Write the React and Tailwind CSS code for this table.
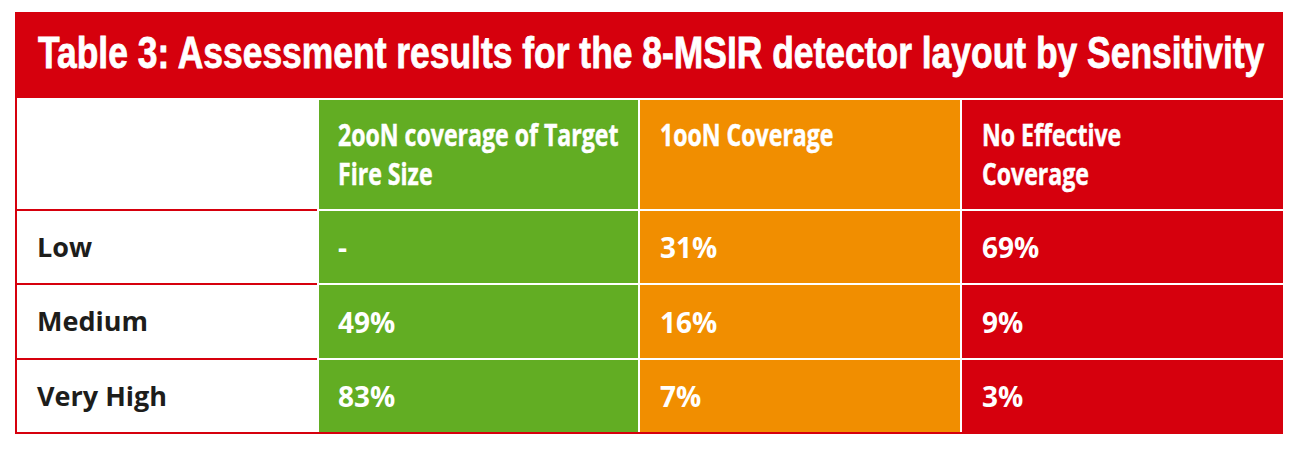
import React from "react";

const rows = [
  { label: "Low", two: "-", one: "31%", none: "69%" },
  { label: "Medium", two: "49%", one: "16%", none: "9%" },
  { label: "Very High", two: "83%", one: "7%", none: "3%" },
];

const Value = ({ children }) => (
  <span className="font-['Open_Sans',sans-serif] font-bold text-[28px] text-white">
    {children}
  </span>
);

const HeadText = ({ children }) => (
  <span className="inline-block origin-left scale-x-[0.745] whitespace-nowrap font-['Open_Sans',sans-serif] font-bold text-[31px] leading-[39px] text-white [-webkit-text-stroke:0.5px_white]">
    {children}
  </span>
);

const App = () => {
  return (
    <div className="w-[1300px] h-[452px] bg-white pt-[12px] pl-[15px]">
      <div className="w-[1268px] border-l-2 border-b-2 border-[#d6000d]">
        <div className="h-[86px] bg-[#d6000d] flex items-center pl-[21px] pb-[5px]">
          <h1 className="inline-block origin-left scale-x-[0.805] whitespace-nowrap font-['Liberation_Sans',Arial,sans-serif] font-bold text-[44px] text-white [-webkit-text-stroke:0.8px_white]">
            Table 3: Assessment results for the 8-MSIR detector layout by
            Sensitivity
          </h1>
        </div>

        <div className="grid grid-cols-[300px_321px_322px_323px]">
          <div className="h-[111px] bg-white" />
          <div className="h-[111px] bg-[#62ad23] border-t-2 border-l-2 border-white pl-[19px] pt-[15px]">
            <HeadText>
              2ooN coverage of Target
              <br />
              Fire Size
            </HeadText>
          </div>
          <div className="h-[111px] bg-[#f18e00] border-t-2 border-l-2 border-white pl-[20px] pt-[15px]">
            <HeadText>1ooN Coverage</HeadText>
          </div>
          <div className="h-[111px] bg-[#d6000d] border-t-2 border-l-2 border-white pl-[20px] pt-[15px]">
            <HeadText>
              No Effective
              <br />
              Coverage
            </HeadText>
          </div>

          {rows.map((row, i) => {
            const h = i === 1 ? "h-[75px]" : "h-[74px]";
            return (
              <React.Fragment key={row.label}>
                <div className={`${h} bg-white border-t-2 border-[#d6000d] pl-[20px] flex items-center`}>
                  <span className="font-['Open_Sans',sans-serif] font-bold text-[27px] text-[#1d1d1b]">
                    {row.label}
                  </span>
                </div>
                <div className={`${h} bg-[#62ad23] border-t-2 border-l-2 border-white pl-[19px] flex items-center`}>
                  <Value>{row.two}</Value>
                </div>
                <div className={`${h} bg-[#f18e00] border-t-2 border-l-2 border-white pl-[20px] flex items-center`}>
                  <Value>{row.one}</Value>
                </div>
                <div className={`${h} bg-[#d6000d] border-t-2 border-l-2 border-white pl-[20px] flex items-center`}>
                  <Value>{row.none}</Value>
                </div>
              </React.Fragment>
            );
          })}
        </div>
      </div>
    </div>
  );
};

export default App;
